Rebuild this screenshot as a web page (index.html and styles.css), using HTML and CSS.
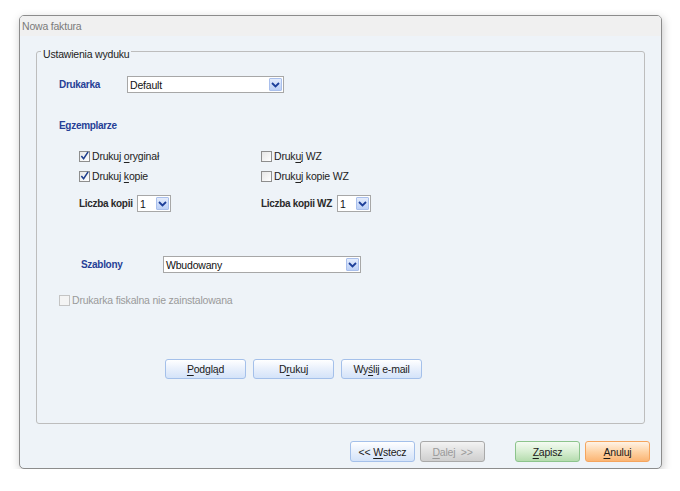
FILE: index.html
```html
<!DOCTYPE html>
<html lang="pl">

<head>
    <meta charset="UTF-8" />
    <title>Nowa faktura</title>
    <link rel="stylesheet" href="styles.css">
</head>

<body>
    <div class="window">
        <div class="titlebar">Nowa faktura</div>

        <div class="window-body">
            <fieldset class="group">
                <legend>Ustawienia wyduku</legend>

                <div class="group-inner">
                    <div class="row row-printer">
                        <span class="label label-blue w-printer">Drukarka</span>
                        <div class="combo combo-printer">
                            <span class="combo-value">Default</span>
                            <span class="combo-btn"><svg width="9" height="6" viewBox="0 0 9 6"><path d="M1 1 L4.5 4.5 L8 1" fill="none" stroke="#1d3f9a" stroke-width="1.8"/></svg></span>
                        </div>
                    </div>

                    <div class="row row-section">
                        <span class="label label-blue">Egzemplarze</span>
                    </div>

                    <div class="copies">
                        <label class="check"><span class="box"><svg width="10" height="10" viewBox="0 0 10 10"><path d="M1.5 5 L4 8 L9 0.5" fill="none" stroke="#1f3e8c" stroke-width="1.7"/></svg></span><span>Drukuj <u>o</u>ryginał</span></label>
                        <label class="check"><span class="box"></span><span>Druk<u>u</u>j WZ</span></label>
                        <label class="check"><span class="box"><svg width="10" height="10" viewBox="0 0 10 10"><path d="M1.5 5 L4 8 L9 0.5" fill="none" stroke="#1f3e8c" stroke-width="1.7"/></svg></span><span>Drukuj <u>k</u>opie</span></label>
                        <label class="check"><span class="box"></span><span>Druk<u>u</u>j kopie WZ</span></label>

                        <div class="count">
                            <span class="label label-dark w-count">Liczba kopii</span>
                            <div class="combo combo-small">
                                <span class="combo-value">1</span>
                                <span class="combo-btn"><svg width="9" height="6" viewBox="0 0 9 6"><path d="M1 1 L4.5 4.5 L8 1" fill="none" stroke="#1d3f9a" stroke-width="1.8"/></svg></span>
                            </div>
                        </div>
                        <div class="count">
                            <span class="label label-dark w-count-wz">Liczba kopii WZ</span>
                            <div class="combo combo-small">
                                <span class="combo-value">1</span>
                                <span class="combo-btn"><svg width="9" height="6" viewBox="0 0 9 6"><path d="M1 1 L4.5 4.5 L8 1" fill="none" stroke="#1d3f9a" stroke-width="1.8"/></svg></span>
                            </div>
                        </div>
                    </div>

                    <div class="row row-templates">
                        <span class="label label-blue w-templates">Szablony</span>
                        <div class="combo combo-templates">
                            <span class="combo-value">Wbudowany</span>
                            <span class="combo-btn"><svg width="9" height="6" viewBox="0 0 9 6"><path d="M1 1 L4.5 4.5 L8 1" fill="none" stroke="#1d3f9a" stroke-width="1.8"/></svg></span>
                        </div>
                    </div>

                    <label class="check check-disabled"><span class="box"></span><span>Drukarka fiskalna nie zainstalowana</span></label>

                    <div class="actions">
                        <button class="btn btn-blue"><u>P</u>odgląd</button>
                        <button class="btn btn-blue">D<u>r</u>ukuj</button>
                        <button class="btn btn-blue">Wy<u>ś</u>lij e-mail</button>
                    </div>
                </div>
            </fieldset>

            <div class="footer">
                <button class="btn btn-nav btn-blue">&lt;&lt; <u>W</u>stecz</button>
                <button class="btn btn-nav btn-gray" disabled><u>D</u>alej &nbsp;&gt;&gt;</button>
                <span class="spacer"></span>
                <button class="btn btn-nav btn-green"><u>Z</u>apisz</button>
                <button class="btn btn-nav btn-orange"><u>A</u>nuluj</button>
            </div>
        </div>
    </div>
</body>

</html>
```

FILE: styles.css
```css
:root {
    --window-bg: #eef3f8;
    --title-bg: #f0f0f0;
    --border-color: #bdbdbd;
    --label-blue: #263f96;
    --text-color: #1e1e1e;
    --text-disabled: #9a9a9a;
}

* {
    box-sizing: border-box;
    margin: 0;
    padding: 0;
}

body {
    font-family: "Liberation Sans", Arial, sans-serif;
    font-size: 10.5px;
    letter-spacing: -0.2px;
    color: var(--text-color);
    background: #fff;
    padding: 15px 0 0 19px;
}

u {
    text-decoration-thickness: 1px;
    text-underline-offset: 2px;
}

.window {
    width: 643px;
    height: 454px;
    border: 1px solid #8c8c8c;
    border-radius: 5px;
    background: var(--window-bg);
    box-shadow: 1px 3px 10px rgba(0, 0, 0, 0.22);
    overflow: hidden;
    display: flex;
    flex-direction: column;
}

.titlebar {
    height: 20px;
    line-height: 20px;
    padding-left: 2px;
    background: var(--title-bg);
    color: #7a7a7a;
}

.window-body {
    flex: 1;
    padding: 6px 16px 0 16px;
    display: flex;
    flex-direction: column;
}

/* Group box */
.group {
    height: 382px;
    border: 1px solid var(--border-color);
    border-radius: 3px;
}

.group legend {
    margin-left: 4px;
    padding: 5px 2px 0 2px;
    line-height: 14px;
    color: #222;
}

.group-inner {
    padding-left: 22px;
}

.row {
    display: flex;
    align-items: center;
}

.label {
    font-weight: bold;
    font-size: 10px;
    letter-spacing: -0.3px;
    white-space: nowrap;
}

.label-blue {
    color: var(--label-blue);
}

.label-dark {
    color: #2a2a2a;
}

.row-printer {
    margin-top: 15px;
    height: 17px;
}

.w-printer {
    width: 68px;
}

.row-section {
    margin-top: 25px;
    height: 14px;
}

/* Combo box */
.combo {
    height: 17px;
    background: #fff;
    border: 1px solid #a7a7a7;
    display: flex;
    align-items: center;
    padding: 0 1px 0 2px;
}

.combo-value {
    flex: 1;
    color: #111;
}

.combo-btn {
    width: 13px;
    height: 13px;
    border: 1px solid #a9bfec;
    border-radius: 1px;
    background: linear-gradient(#e4ecfc, #bcd0f6);
    display: flex;
    align-items: center;
    justify-content: center;
}

.combo-printer {
    width: 157px;
}

.combo-small {
    width: 34px;
}

.combo-templates {
    width: 198px;
}

/* Copies */
.copies {
    margin-top: 17px;
    padding-left: 20px;
    display: grid;
    grid-template-columns: 182px auto;
    grid-template-rows: 14px 14px 23px;
    row-gap: 6px;
}

.copies .count {
    display: flex;
    align-items: center;
    align-self: end;
    height: 17px;
}

.w-count {
    width: 58px;
}

.w-count-wz {
    width: 76px;
}

.check {
    display: flex;
    align-items: center;
    height: 14px;
    color: #222;
    white-space: nowrap;
}

.box {
    width: 11px;
    height: 11px;
    margin-right: 2px;
    border: 1px solid #8e8e8e;
    background: linear-gradient(135deg, #e6e6e6, #ffffff);
    display: flex;
    align-items: center;
    justify-content: center;
    overflow: visible;
}

.check-disabled {
    margin-top: 20px;
    color: var(--text-disabled);
}

.check-disabled .box {
    border-color: #c4c4c4;
    background: #f4f4f4;
}

.row-templates {
    margin-top: 44px;
    height: 17px;
    padding-left: 22px;
}

.w-templates {
    width: 82px;
}

/* Buttons */
.actions {
    margin-top: 52px;
    padding-left: 106px;
    display: flex;
    gap: 7px;
}

.btn {
    font-family: inherit;
    font-size: 10.5px;
    letter-spacing: -0.2px;
    width: 81px;
    height: 20px;
    flex-shrink: 0;
    border-radius: 3px;
    color: #1a1a1a;
    cursor: pointer;
}

.btn-blue {
    border: 1px solid #a4c0ea;
    background: linear-gradient(#ffffff, #eaf1fc 45%, #d4e3f9);
}

.footer {
    margin-top: 17px;
    padding-left: 314px;
    display: flex;
    gap: 5px;
}

.spacer {
    width: 20px;
    flex-shrink: 0;
}

.btn-nav {
    width: 65px;
    height: 21px;
}

.btn-gray {
    border: 1px solid #a9a9a9;
    background: linear-gradient(#f3f3f3, #e0e0e0 50%, #cfcfcf);
    color: #9a9a9a;
    cursor: default;
}

.btn-green {
    border: 1px solid #8cc48c;
    background: linear-gradient(#f4fbf2, #d7eed2 50%, #b5dcae);
}

.btn-orange {
    border: 1px solid #f5a55e;
    background: linear-gradient(#fff3e6, #fed3a6 50%, #fbb574);
}
```
